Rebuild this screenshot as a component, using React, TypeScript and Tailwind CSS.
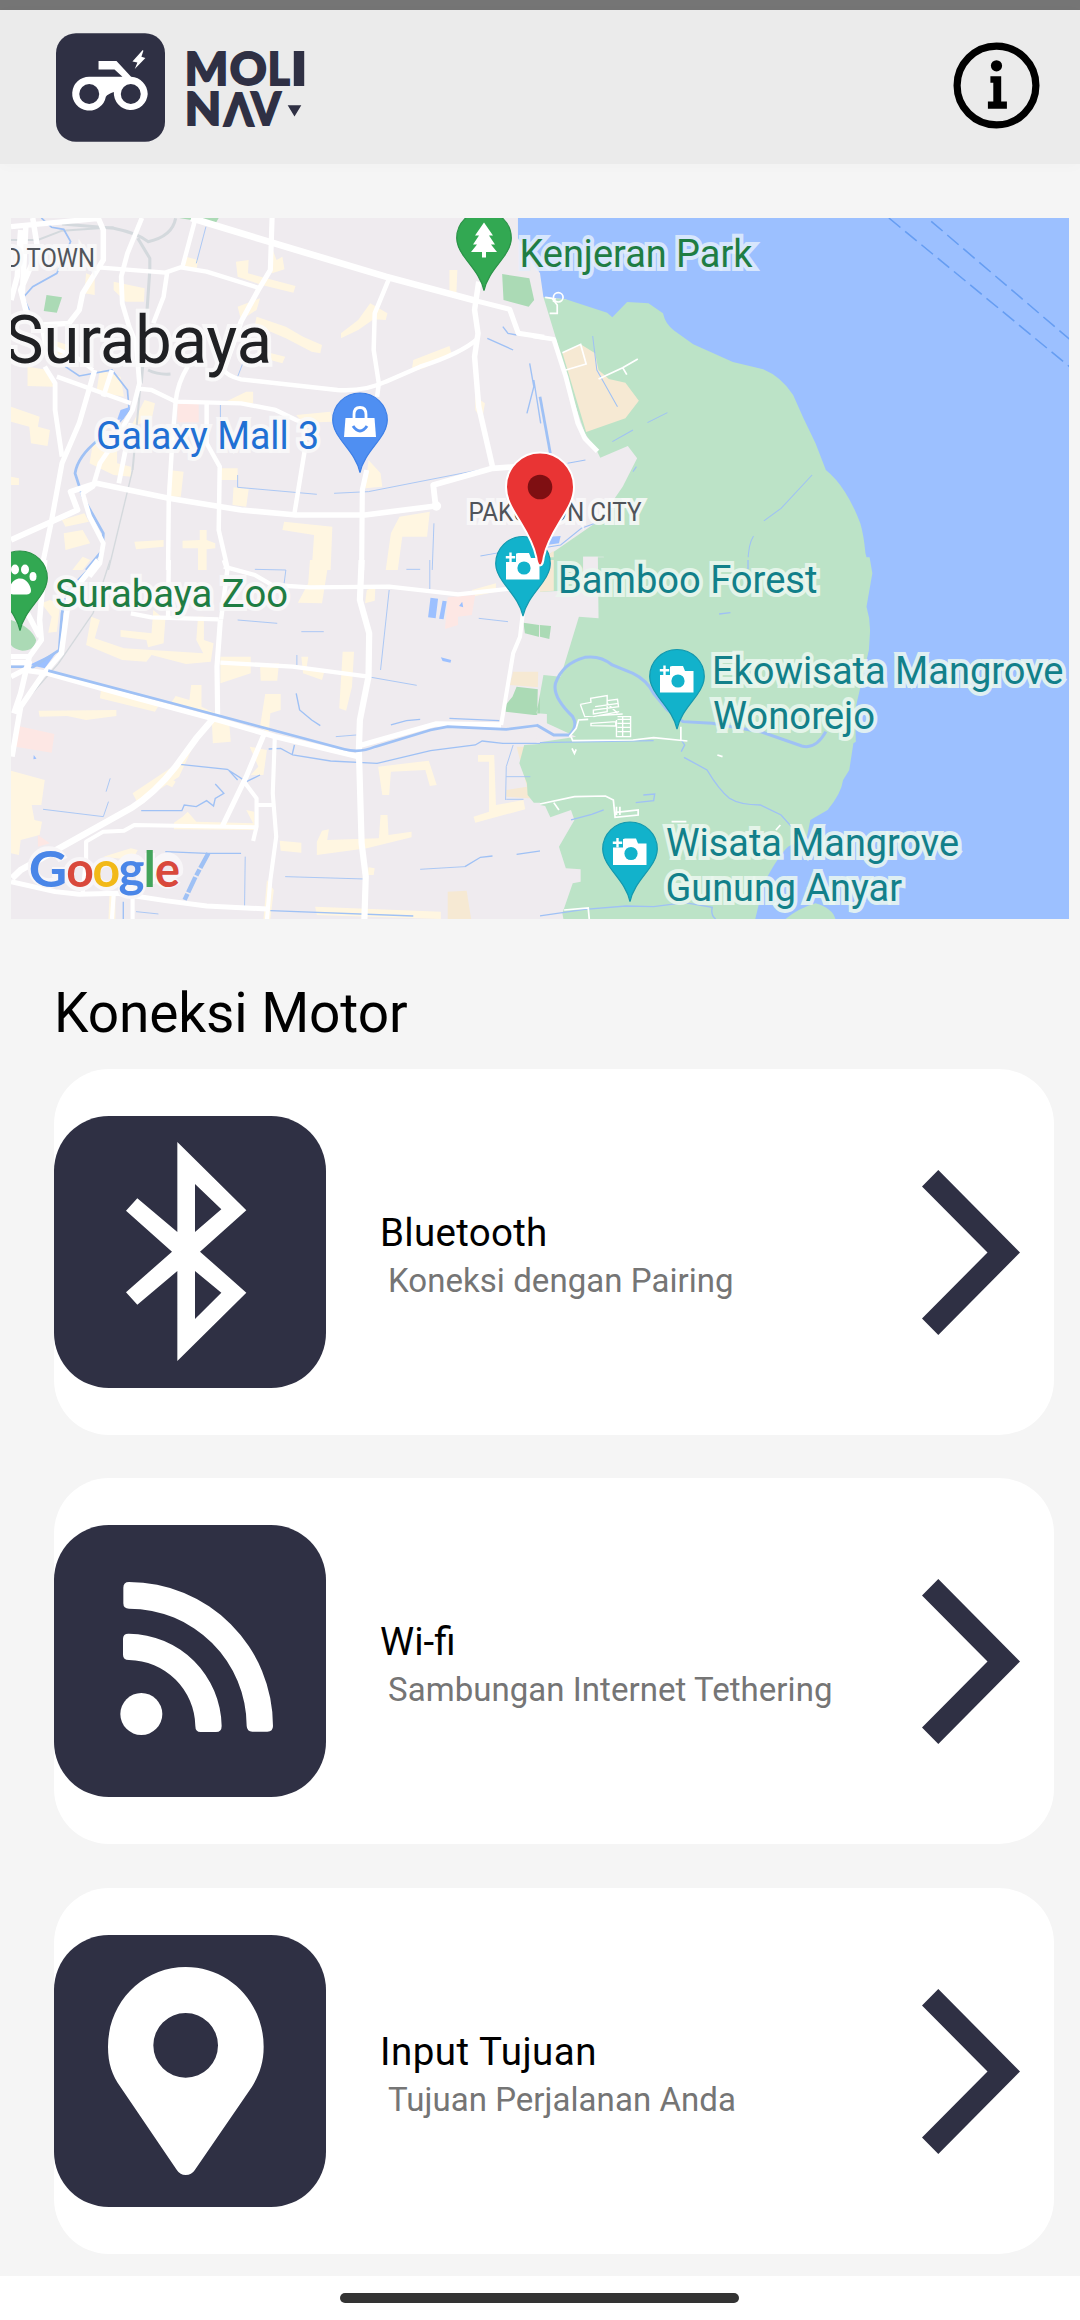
import type { ReactNode } from "react";

const INK = "#2f3044";
const LAND = "#efebef";
const GREEN = "#bce3c7";
const PARK = "#abdab5";
const CREAM = "#fff6e1";
const SAND = "#f6e9d3";
const WATER = "#9cc0ff";
const STREAM = "#9fc1f5";
const PINK = "#fde7e4";

function LogoBadge() {
  return (
    <svg viewBox="166 99 328 327" className="h-[109px] w-[109px] shrink-0">
      <rect x="166" y="99" width="328" height="327" rx="60" fill={INK} />
      <path
        fillRule="evenodd"
        fill="#fff"
        d="M266 230H366L342 208H294V183H348L392 230C420 231 442 255 442 282A51 51 0 0 1 340 276Q322 282 316 290A51 51 0 1 1 266 230ZM266 252A30 30 0 1 0 266 312A30 30 0 1 0 266 252ZM391 252A30 30 0 1 0 391 312A30 30 0 1 0 391 252Z"
      />
      <path d="M427 150L396 184L411 187L403 207L435 174L423 170L429 152Z" fill="#fff" />
    </svg>
  );
}

function Wordmark() {
  return (
    <svg
      viewBox="183.3 45.3 122 84"
      className="ml-5 h-[84px] w-[122px] shrink-0 overflow-visible"
      fontFamily="Lato"
      fontWeight="900"
      fontSize="45"
      fill={INK}
      stroke={INK}
      strokeWidth="1.8"
    >
      <text x="183" y="85.3" textLength="43.5" lengthAdjust="spacingAndGlyphs">M</text>
      <text x="228" y="85.3" textLength="37" lengthAdjust="spacingAndGlyphs">O</text>
      <text x="266" y="85.3" textLength="22" lengthAdjust="spacingAndGlyphs">L</text>
      <text x="289" y="85.3" textLength="16.5" lengthAdjust="spacingAndGlyphs">I</text>
      <text x="183" y="125.3" textLength="36.5" lengthAdjust="spacingAndGlyphs">N</text>
      <text transform="rotate(180 237.2 109)" x="222.6" y="124.8" textLength="29.5" lengthAdjust="spacingAndGlyphs">V</text>
      <text x="249.5" y="125.3" textLength="29.5" lengthAdjust="spacingAndGlyphs">V</text>
      <path d="M287.6 106.5H298L292.8 115Z" />
    </svg>
  );
}

function InfoIcon() {
  return (
    <svg viewBox="0 0 87 87" className="h-[87px] w-[87px]">
      <circle cx="43.5" cy="43.5" r="39.4" fill="none" stroke="#000" strokeWidth="7.2" />
      <circle cx="43.5" cy="23.8" r="5.6" />
      <path d="M37.4 34.3H48.2V59.6H53.9V66.8H34.9V59.6H40.3V40.8H37.4Z" />
    </svg>
  );
}

const PIN = "M0 0C-3-14-13-24-20-34C-25-41-27.3-46-27.3-52.5A27.3 27 0 0 1 27.3-52.5C27.3-46 25-41 20-34C13-24 3-14 0 0Z";

function Pin({ x, y, fill, edge, children }: { x: number; y: number; fill: string; edge: string; children: ReactNode }) {
  return (
    <g transform={`translate(${x} ${y})`}>
      <path d={PIN} fill={fill} stroke={edge} strokeWidth="1.2" />
      {children}
    </g>
  );
}

function Camera() {
  return (
    <>
      <path d="M-17-57H-8V-62L-5-63H6L8-58H16.5V-36.5H-17Z" fill="#fff" />
      <circle cx="1" cy="-48" r="6.6" fill="#12b2cb" />
      <path d="M-18-66H-7V-54H-18Z" fill="#12b2cb" />
      <path d="M-12.5-63.5V-54M-17.2-58.8H-7.8" stroke="#fff" strokeWidth="2.4" />
    </>
  );
}

function CameraPin({ x, y }: { x: number; y: number }) {
  return (
    <Pin x={x} y={y} fill="#12b2cb" edge="#1498ad">
      <Camera />
    </Pin>
  );
}

type LabelProps = { x: number; y: number; w: number; size?: number; fill: string; halo?: string; children: string };

function Label({ x, y, w, size = 39.5, fill, halo = "#fafafa", children }: LabelProps) {
  return (
    <text
      x={x}
      y={y}
      fontSize={size}
      textLength={w}
      lengthAdjust="spacingAndGlyphs"
      fill={fill}
      stroke={halo}
      strokeWidth="8"
      strokeOpacity="0.85"
      paintOrder="stroke"
    >
      {children}
    </text>
  );
}

function NorthWest() {
  return (
    <g transform="translate(0 210) scale(.3444 .3333)">
      <g fill={CREAM}>
        <path d="M540 140L575 150L570 185L530 170ZM685 155L722 150L720 190L858 228L852 248L760 225L690 200ZM790 115L803 150L820 140L826 178L790 190ZM330 215L420 235L418 275L365 275L330 240ZM250 190L275 200V255L245 250ZM745 320L830 350L880 380L935 405L930 430L905 425L830 385L740 345ZM1075 280L1125 310L1120 330L1085 328L1040 360L990 385V370L1040 330ZM1305 180H1328L1325 255L1305 250Z" />
        <path d="M750 420L828 440L820 460L750 440ZM80 470L140 480L155 530L80 528ZM290 480L350 500L360 560L280 545ZM32 590L115 620L110 650L145 660L138 708L90 700L85 650L32 635ZM715 545L735 545V580L655 575ZM860 615L960 605L965 635L880 638ZM1200 450L1305 408L1312 435L1230 475L1195 485ZM270 700L340 720V760L380 770V800L330 795L260 760ZM490 780L533 785L525 860H485ZM635 775H690V810H640ZM678 832L722 838L715 890L675 885ZM1070 750L1105 790L1110 830L1060 835ZM420 570L450 580L440 630L380 650Z" />
        <path d="M825 935L965 950L960 1080H905L912 975L820 960ZM1160 920L1248 905L1240 980L1168 980L1155 1080H1120L1135 970ZM180 930L245 910L258 935L190 950ZM185 970L240 960L262 1000L190 1020ZM390 995L475 990V1010L395 1018ZM530 992L580 990V960H600V990L625 1000V1015L600 1018V1080H575V1015H530ZM240 1040L262 1050L240 1080H210ZM32 800L55 805V825H32ZM690 290L755 265L745 300L700 330ZM1380 560L1408 580L1400 630L1380 600ZM150 390L215 410V450L160 440Z" />
      </g>
      <rect x="515" y="582" width="62" height="55" fill={PINK} />
      <path d="M520 24H635L625 42Z M135 255L180 262L165 308L127 303ZM1458 192L1537 205L1551 270L1535 290L1462 270Z" fill={PARK} />
      <g fill="none" stroke="#d4d9dd" strokeWidth="9">
        <path d="M180 42L330 55Q400 70 430 95Q500 80 510 25M400 85L435 145V180L425 330L410 520" />
        <path d="M32 90L110 90L180 62L330 52M410 500L385 780" strokeWidth="6" />
        <path d="M385 780L315 1080" strokeWidth="4" />
        <path d="M430 480Q460 495 495 492" />
      </g>
      <g fill="none" stroke={STREAM} strokeWidth="5">
        <path d="M120 24L150 52L185 58L205 95L165 190L95 230L68 262L85 300" />
        <path d="M190 470L230 498L325 480L370 540L375 600L345 640" />
        <path d="M285 690Q225 740 218 790L240 860L300 970L298 1020L250 1080" strokeWidth="8" />
        <path d="M690 795V832L920 853M970 850L1070 845L1450 768M640 585V630M598 50L570 160M690 500L705 460M1260 940L1255 1080" strokeWidth="2.5" />
        <path d="M1538 460L1550 530L1530 610M1550 510L1570 640M1415 385L1490 420M1460 350L1475 370L1500 375" strokeWidth="4" />
        <path d="M1395 1038L1450 1028" strokeWidth="3" />
      </g>
      <path d="M350 600L378 590L358 628L340 630Z" fill={WATER} />
      <g fill="none" stroke="#fff" strokeLinejoin="round">
        <path strokeWidth="20" d="M555 24L790 98L1120 200L1380 272" />
        <path strokeWidth="15" d="M1380 272L1480 298L1505 370L1580 382M790 24L785 180L750 240L700 335L650 480" />
        <path strokeWidth="13" d="M285 172L480 188L525 172L600 185L755 235M565 35L530 170M485 190L475 260L445 340M1130 205L1088 310L1085 420L1100 520L1095 560M165 500L380 580" />
        <path strokeWidth="16" d="M1390 215L1378 300L1388 370L1378 440L1390 590L1410 680L1430 770" />
        <path strokeWidth="13" d="M1388 385Q1340 430 1220 470L1120 515Q1060 545 980 540L700 508Q660 500 640 470M395 535L440 540L510 575L700 580L800 600L860 630L885 640L885 720L855 910" />
        <path strokeWidth="13" d="M545 470Q515 520 510 575L500 700L490 870L488 1080M600 580L600 700L638 770L635 960L662 1080" />
        <path strokeWidth="17" d="M32 990L150 935L225 900L205 845L280 820L490 865L700 900L860 915L1060 915L1265 888L1258 825L1430 775L1500 770" />
        <path strokeWidth="15" d="M1065 780L1052 840L1050 1080M275 480L230 640L180 760L150 930L120 1080" />
        <path strokeWidth="14" d="M130 470L160 520L160 600L180 740M412 24L370 130L352 200L355 280L375 350L395 400L405 520L385 600L330 700L290 760L270 830L240 850L260 920L300 1000L290 1060L260 1100M380 640L345 820M325 480L300 560" />
        <path strokeWidth="16" d="M285 24L300 60L300 150L240 250L230 300L200 340L120 345M32 50L290 25M75 50L65 250M95 24L110 120L60 240L80 320M60 60L50 200L32 270" />
        <path strokeWidth="12" d="M120 345L130 400L215 440M215 345L220 440L270 480" />
      </g>
      <circle cx="1267" cy="888" r="14" fill="#fff" />
    </g>
  );
}

function SouthWest() {
  return (
    <g transform="translate(0 560) scale(.3444 .3333)">
      <g fill={CREAM}>
        <path d="M265 170L290 180L275 235L360 265L590 280L570 240L575 170H592V240L620 250L612 305L540 312L440 285L425 305L355 300L250 255ZM350 210L440 220L445 150L480 180L475 250L430 262L425 240L350 230ZM145 120L175 130L165 215L140 218L150 170L120 130ZM900 0H955L935 130L865 128L895 70ZM1065 90L1090 80L1088 122L1060 130Z" />
        <path d="M640 290L728 290V340L640 370ZM755 315L810 310L805 362H757ZM875 290H895L890 325L943 330L935 360L880 340ZM995 275H1028L1022 380L1005 452L985 445ZM112 452L338 450V468L250 480L195 468L115 470ZM555 375H585V440L625 460L495 432L510 408L550 420ZM295 375L465 430L450 455L290 415ZM770 402H815V450L785 460L780 520L755 500ZM615 480H665L670 545L618 550ZM725 560L775 570L765 645H728L750 620Z" />
        <path d="M32 632L130 660L120 735H92L100 780L122 785L115 825L60 840L55 885L32 880ZM1098 620L1245 602L1268 675L1248 678L1235 630L1135 635L1130 705H1110ZM1388 585H1435L1440 735L1520 720L1525 748L1380 788L1375 770L1420 755V605H1388ZM530 770L545 755L570 785L735 790L715 750L738 755L740 810L505 808V788ZM1105 765H1125L1128 825L1195 815V832L1065 865L920 885V845L935 812L955 808L950 840L1100 835ZM812 842L875 848V878L815 872ZM1070 922L1088 925L1085 945H1068ZM915 1040L1280 1055V1077L920 1065ZM775 960L795 990L785 1077H765ZM380 865L400 870L385 900L300 890ZM318 1005H335V1077H315ZM385 700L530 600L550 550L560 560L520 650L400 730ZM490 650L510 665L500 682L480 672ZM1370 90L1440 70V95L1380 108Z" />
      </g>
      <path d="M50 497L158 522L150 578L45 560ZM1300 112L1380 105L1370 165L1330 170V195L1292 207ZM110 825L145 850L110 860Z" fill={PINK} />
      <path d="M1300 995L1355 992L1368 1077H1300ZM1490 335H1600V385L1480 375ZM1500 560H1600V720L1470 710V690L1530 680Z" fill={SAND} />
      <path d="M32 180Q90 200 105 240Q100 272 65 272Q40 268 32 255ZM1520 188L1600 200V240L1524 220ZM1500 380L1600 392V465H1550L1468 455V435L1488 410Z" fill={PARK} />
      <path d="M1522 555L1508 610L1530 670L1532 705L1550 728H1600V550Z" fill={GREEN} />
      <g fill={WATER}>
        <path d="M1250 113L1272 116L1265 175L1243 172ZM1285 122L1297 124L1288 178L1275 176ZM1280 292L1310 300L1308 308L1285 303ZM85 315L165 275L130 325ZM1342 125L1333 138L1345 142ZM98 585L106 596L97 598Z" />
      </g>
      <path d="M320 0L270 160L170 310L60 440" fill="none" stroke="#d4d9dd" strokeWidth="4" />
      <g fill="none" stroke={STREAM} strokeWidth="4">
        <path strokeWidth="8" d="M285 0L195 95L180 160L172 270L90 325M32 320H90" />
        <path d="M780 567L815 565L850 585L960 603L1095 610L1250 572L1380 555L1400 543L1460 550L1600 550M855 555L848 585" />
        <path d="M522 613L660 628L715 665L755 645M665 632L690 660M410 752H528L535 735L570 740L600 722L620 738L625 715L650 700L625 672M480 875L600 880L700 880" />
        <path strokeWidth="13" strokeDasharray="50 5 20 6" d="M605 880L568 950L535 1022" />
        <path strokeWidth="2.5" d="M125 748L300 770L315 725M308 695L320 655M690 180L805 190M875 215H940M862 285V320M1078 352L1210 376M1130 90L1105 330M975 530L1035 525M1390 175L1475 185M1248 0V90M740 28L830 30L825 70M828 950L1055 957M395 1055L460 1062M712 890L710 1050M1490 555L1470 620L1468 720M1470 650H1540M1470 718H1520M1180 28H1220M1220 928L1350 920" />
        <path d="M860 400L870 450L905 480L930 497M1135 495L1180 482L1220 478M1305 475L1450 482M1350 920L1395 892L1430 888M1500 883L1600 868M785 1052L1200 1068M358 1025V1077" />
      </g>
      <g fill="none" stroke="#fff" strokeLinejoin="round">
        <path strokeWidth="13" d="M490 0L488 170M642 178L660 30L650 0M650 20L740 45L790 75L900 82L1130 80L1330 103L1490 85M380 160L440 172L635 178M640 308L850 320L1070 350" />
        <path strokeWidth="15" d="M640 178L630 320L632 470" />
        <path strokeWidth="18" d="M1050 0L1045 120L1072 220L1070 350L1045 480L1042 570L1050 850L1062 950L1058 1080" />
        <path strokeWidth="16" d="M32 350L70 330L140 340L400 415L640 482L800 530L1040 590M1040 558L1265 492L1455 495" />
        <path strokeWidth="12" d="M1455 495L1490 280L1510 230L1518 160" />
        <path strokeWidth="19" d="M620 475L570 535L510 620Q450 700 380 745L180 860L60 930L35 955" />
        <path strokeWidth="15" d="M32 965L160 995L230 1003L340 1000L480 1022L600 1038L775 1047M768 520L715 650L645 800" />
        <path strokeWidth="12" d="M705 660L745 715L745 800L735 843M250 900V845L300 815L360 812L390 795L740 802M745 735H790M798 530L792 700L802 830L785 960L775 1080M250 890L240 1000M330 1005L325 1077M385 1010V1077" />
        <path strokeWidth="16" d="M130 0L115 180L120 240L85 290H32M80 160L115 230M285 0L200 110L178 280L120 350L60 440L35 590M85 290L60 400L40 460M32 308H85L80 330" />
      </g>
      <path d="M140 332L500 430L780 507L1000 568Q1045 580 1090 560L1250 510L1300 500L1470 508L1570 495" fill="none" stroke={STREAM} strokeWidth="8" />
    </g>
  );
}

function NorthEast() {
  return (
    <g transform="translate(540 210) scale(.3444 .3333)">
      <path d="M-64 24V85L-30 140L0 190L10 262L75 268L300 500L600 1090H1560V24Z" fill={WATER} />
      <path d="M10 262L75 268L195 308L210 322L253 276L315 280L357 310Q365 345 390 362L445 403L560 456L648 478Q700 500 735 555L765 625L800 700L830 780Q860 805 885 845Q910 885 930 940Q940 975 945 1030L960 1090H-20L-30 1060L40 1025L160 940L215 868L240 830L282 745L255 708L175 743L165 722L130 670L75 500L45 380Z" fill={GREEN} />
      <path d="M65 428L118 403L160 430L170 480L200 507L248 518L287 572L248 625L134 666Z" fill={SAND} />
      <path d="M125 1040H185L200 1100H125Z" fill={LAND} />
      <path d="M-30 1075L40 1022V1100H-30Z" fill={SAND} />
      <path d="M25 980L60 978L55 1000L20 1005Z" fill={WATER} />
      <g fill="none" stroke={STREAM} strokeWidth="3">
        <path d="M153 378L165 480L225 590M210 695L270 660M312 638L370 608M790 795L700 895L650 933M620 978Q600 1010 605 1090M270 785L280 770" />
        <path d="M80 760L132 750M20 1012L60 1005L120 955L160 940" />
        <path d="M0 560L30 730" strokeWidth="8" />
      </g>
      <g fill="none" stroke="#fff">
        <path strokeWidth="14" strokeLinejoin="round" d="M-20 378L40 388L75 500L110 640L130 685L167 724" />
        <path strokeWidth="5" d="M65 428L118 403L134 462L75 480M170 507L240 473L284 447M240 473L252 494M15 262L35 265L50 285V310H28M38 275L45 265" />
        <circle cx="53" cy="262" r="14" strokeWidth="5" />
      </g>
      <path d="M1013 24L1540 472M1136 34L1540 390" fill="none" stroke="#669df2" strokeWidth="4.5" strokeDasharray="44 18" />
    </g>
  );
}

function SouthEast() {
  return (
    <g transform="translate(540 560) scale(.3444 .3333)">
      <path d="M500 -5H1560V1090H500Z" fill={WATER} />
      <path d="M0 -8H957L965 40L948 140Q960 180 958 220L955 270L915 450L917 545L910 550L898 630L880 660Q875 700 835 750L785 780L775 830L720 860Q690 890 650 970L622 1090H0Z" fill={GREEN} />
      <path d="M712 1078Q750 1045 800 1030Q850 1045 858 1078Z" fill={GREEN} />
      <path d="M0 95L125 90V-10H168L170 175L113 170L60 350L10 345L-10 460L20 462V490L105 530L-10 548ZM0 735L15 738L30 772L90 750L100 780L55 860L75 925L118 928V965L95 970L65 1060L70 1090H0Z" fill={LAND} />
      <path d="M0 0H40V92L0 95Z" fill={SAND} />
      <path d="M0 195L32 198L27 237L0 230Z" fill={PARK} />
      <g fill="none" stroke={STREAM} strokeWidth="9">
        <path d="M-10 495L40 525L85 525Q112 500 95 470Q35 410 45 370Q65 310 130 292Q175 285 210 315L270 340Q310 360 330 400L370 450L415 485L500 490L640 515L760 558Q800 570 830 515" />
        <path strokeWidth="4" d="M0 548L330 542M410 540L420 555L410 575M418 592L485 630Q520 690 550 715Q580 735 640 735L700 765L730 800M90 780L150 763L185 750M0 1068L130 1048L250 1038L330 1040L420 1028L500 1042Q495 1065 510 1077M278 728L330 722L333 702L300 705M520 162L553 158M604 0V28" />
      </g>
      <g fill="none" stroke="#fff" strokeWidth="5">
        <path d="M90 530L95 542L270 540L330 533L428 543M409 500V540M85 530L105 505L112 480L140 478M0 732L100 710L190 708L213 720L218 772L285 765V750L215 758M222 740V765M232 740V765M40 728L55 750M70 1050L140 1044L143 1077M93 565L100 580L105 568M515 585L530 590M685 810L698 795M382 785H425" />
        <path strokeWidth="4" d="M117 433L148 427L147 415L195 407V455L155 462V450L228 440L225 418L195 422M117 433L130 470L240 462M160 440L228 430M155 470L230 455M148 490L220 485V498L148 497V488M222 480V530H263V470H225M225 478H263M225 490H263M225 502H263M225 515H263M240 470V528M195 430L225 460" />
      </g>
    </g>
  );
}

function MapView() {
  const blue = "#e3eefc";
  const mint = "#ecf8f0";
  const google = [
    { ch: "G", x: 28.8, w: 38.5, fill: "#4a86e8" },
    { ch: "o", x: 66.2, w: 27.6, fill: "#d9493c" },
    { ch: "o", x: 92.6, w: 27.6, fill: "#f2b918" },
    { ch: "g", x: 118.6, w: 26, fill: "#4a86e8" },
    { ch: "l", x: 143.6, w: 12.4, fill: "#43a45b" },
    { ch: "e", x: 155, w: 25, fill: "#d9493c" },
  ];
  return (
    <svg viewBox="11 218 1058 701" className="h-[701px] w-[1058px]" fontFamily="Roboto">
      <rect x="11" y="218" width="1058" height="701" fill={LAND} />
      <NorthWest />
      <SouthWest />
      <NorthEast />
      <SouthEast />

      <Label x={5.5} y={267} w={89.5} size={26} fill="#50545a">D TOWN</Label>
      <Label x={5} y={362.5} w={267} size={67.5} fill="#202124">Surabaya</Label>
      <Label x={96} y={449} w={223} fill="#2170d4">Galaxy Mall 3</Label>
      <Label x={519.5} y={267} w={233} fill="#1f7d43" halo={blue}>Kenjeran Park</Label>
      <Label x={468.5} y={521} w={173} size={26} fill="#50545a">PAKUWON CITY</Label>
      <Label x={55} y={607} w={233} fill="#1f7d43">Surabaya Zoo</Label>

      <Pin x={484} y={290.5} fill="#32a852" edge="#2a9247">
        <path d="M0-68L9-55H5L11-46H7L13-38.5H2V-33H-2V-38.5H-13L-7-46H-11L-5-55H-9Z" fill="#fff" />
      </Pin>
      <Pin x={360} y={472.5} fill="#4f8ff2" edge="#3d7fe6">
        <path d="M-14.5-54.5H14.5L16-35.5H-16Z" fill="#fff" />
        <path d="M-6-54V-58Q-6-65 0-65Q6-65 6-58V-54" fill="none" stroke="#fff" strokeWidth="2.8" />
        <path d="M-7-46.5Q0-36.5 7-46.5" fill="none" stroke="#4f8ff2" strokeWidth="3" />
      </Pin>
      <Pin x={20} y={630.5} fill="#32a852" edge="#2a9247">
        <g fill="#fff">
          <path d="M0-52C7-52 11-44 11-40C11-35 5-36 0-36S-11-35-11-40C-11-44-7-52 0-52Z" />
          <ellipse cx="-5" cy="-61" rx="4" ry="5" />
          <ellipse cx="5" cy="-61" rx="4" ry="5" />
          <ellipse cx="13" cy="-54" rx="3.5" ry="4.5" />
          <ellipse cx="-13" cy="-54" rx="3.5" ry="4.5" />
        </g>
      </Pin>
      <CameraPin x={523} y={616} />
      <CameraPin x={677} y={729} />
      <CameraPin x={630} y={901.5} />

      <Label x={558} y={593} w={259.5} fill="#12808a" halo={mint}>Bamboo Forest</Label>
      <Label x={712} y={684} w={351.5} fill="#12808a" halo={mint}>Ekowisata Mangrove</Label>
      <Label x={713} y={729} w={162} fill="#12808a" halo={mint}>Wonorejo</Label>
      <Label x={666} y={856} w={293} fill="#12808a" halo={mint}>Wisata Mangrove</Label>
      <Label x={665.5} y={901} w={236.5} fill="#12808a" halo={mint}>Gunung Anyar</Label>

      <path
        d="M540 565.5C537.5 565.5 537 563 536.2 557C534 546 529 536 521 523C513 510 506 500 506 487A34 34.5 0 0 1 574 487C574 500 567 510 559 523C551 536 546 546 543.8 557C543 563 542.5 565.5 540 565.5Z"
        fill="#e93434"
        stroke="#fff"
        strokeWidth="2"
      />
      <circle cx="540" cy="487" r="12.3" fill="#7f0f12" />

      <g fontFamily="Lato" fontWeight="700" fontSize="49">
        <g stroke="#f8f6f8" strokeWidth="10" strokeLinejoin="round" fill="none">
          <path d="M63 860A16 16 0 1 0 64 872H52M68 874A12 12 0 1 0 92 874A12 12 0 1 0 68 874M95 874A12 12 0 1 0 119 874A12 12 0 1 0 95 874M121 874A11 12 0 1 0 142 874A11 12 0 1 0 121 874M141 862V885Q140 894 131 894T123 889M150 853V884M157 874A11 12 0 1 1 178 872L160 880Q168 888 177 879" />
        </g>
        {google.map((g) => (
          <text key={g.x} x={g.x} y="886.5" textLength={g.w} lengthAdjust="spacingAndGlyphs" fill={g.fill}>
            {g.ch}
          </text>
        ))}
      </g>
    </svg>
  );
}

function Chevron() {
  return (
    <svg viewBox="0 0 98 165" className="h-[165px] w-[98px] shrink-0" fill={INK}>
      <path d="M16.3 0L98 82.5L16.3 165L0 148.5L65.5 82.5L0 16.5Z" />
    </svg>
  );
}

const BluetoothIcon = (
  <svg viewBox="42 468 816 816" className="h-full w-full" fill="#fff">
    <path
      fillRule="evenodd"
      d="M412 546L619 751L480 875L619 998L412 1203V933L292 1034L258 997L396 875L258 752L292 715L412 816ZM465 672L544 748L465 816ZM465 933L544 998L465 1077Z"
    />
  </svg>
);

const SignalIcon = (
  <svg viewBox="42 195 816 816" className="h-full w-full" fill="#fff">
    <circle cx="304" cy="762" r="63" />
    <path d="M250 383Q250 366 267 366A432 432 0 0 1 699 798Q699 815 682 815H637Q621 815 620 798A353 353 0 0 0 267 446Q250 446 250 430Z" />
    <path d="M249 537Q249 520 267 521A282 282 0 0 1 545 798Q545 816 528 816H482Q466 816 466 798A202 202 0 0 0 267 600Q249 600 249 584Z" />
  </svg>
);

const PlaceIcon = (
  <svg viewBox="42 195 816 816" className="h-full w-full" fill="#fff">
    <path
      fillRule="evenodd"
      d="M437 291C565 291 671 395 671 530C671 580 657 615 635 652L464 901Q455 915 437 915Q420 915 411 901L242 652C216 615 204 580 204 530C204 395 310 291 437 291ZM437 429A97 97 0 1 0 437 623A97 97 0 1 0 437 429Z"
    />
  </svg>
);

const MENU = [
  { title: "Bluetooth", detail: "Koneksi dengan Pairing", icon: BluetoothIcon, tracking: "tracking-[0.3px]", offset: "" },
  { title: "Wi-fi", detail: "Sambungan Internet Tethering", icon: SignalIcon, tracking: "", offset: "" },
  { title: "Input Tujuan", detail: "Tujuan Perjalanan Anda", icon: PlaceIcon, tracking: "tracking-[0.5px]", offset: "mt-px" },
];

export default function App() {
  return (
    <div className="flex h-[2320px] w-[1080px] flex-col bg-[#f5f5f5] font-[Roboto,sans-serif] text-black">
      <div className="h-[10px] shrink-0 bg-[#757575]" />
      <header className="flex h-[154px] shrink-0 items-center justify-between bg-[#ebebeb] pr-10 pl-[55.5px] shadow-[0_2px_14px_rgba(0,0,0,0.02)]">
        <div className="flex items-center">
          <LogoBadge />
          <Wordmark />
        </div>
        <div className="-mt-1">
          <InfoIcon />
        </div>
      </header>

      <section className="mt-[54px] ml-[11px] h-[701px] w-[1058px] shrink-0">
        <MapView />
      </section>

      <h1 className="mt-[62px] pl-[54px] text-[55px] leading-[64px] tracking-[-0.1px]">Koneksi Motor</h1>

      <main className="mt-6 mr-[26px] ml-[54px] flex flex-col gap-[43px]">
        {MENU.map((item) => (
          <article key={item.title} className={`flex h-[366px] items-center rounded-[55px] bg-white pr-[34px] ${item.offset}`}>
            <div className="h-[272px] w-[272px] shrink-0 overflow-hidden rounded-[55px] bg-[#2f3044]">{item.icon}</div>
            <div className="ml-[54px] flex-1 pt-[7px]">
              <h2 className={`text-[38.5px] leading-[51px] ${item.tracking}`}>{item.title}</h2>
              <p className="pl-2 text-[33px] leading-[46px] tracking-[0.05px] text-[#757575]">{item.detail}</p>
            </div>
            <Chevron />
          </article>
        ))}
      </main>

      <footer className="mt-auto flex h-11 shrink-0 items-center justify-center bg-white pr-[2px]">
        <div className="h-[10px] w-[399px] rounded-full bg-[#333333]" />
      </footer>
    </div>
  );
}
